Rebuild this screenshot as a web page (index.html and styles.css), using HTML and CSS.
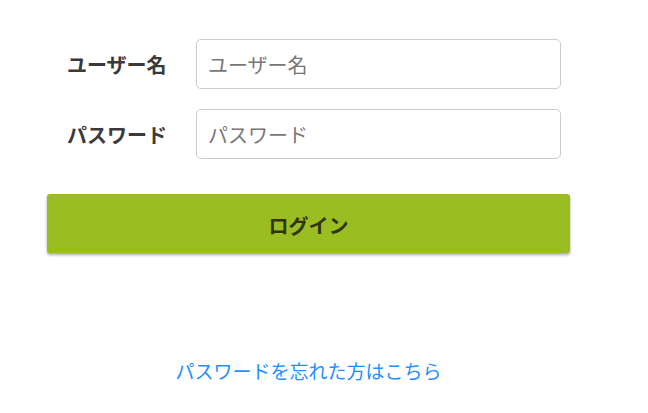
FILE: index.html
```html
<!DOCTYPE html>
<html lang="ja">
<head>
<meta charset="utf-8">
<title>ログイン</title>
<link rel="stylesheet" href="styles.css">
</head>
<body>
<div class="login">
  <form class="login-form">
    <div class="field">
      <label class="field-label" for="username">ユーザー名</label>
      <input class="field-input" id="username" type="text" placeholder="ユーザー名">
    </div>
    <div class="field">
      <label class="field-label" for="password">パスワード</label>
      <input class="field-input" id="password" type="password" placeholder="パスワード">
    </div>
    <button class="login-button" type="button">ログイン</button>
  </form>
  <div class="forgot">
    <a class="forgot-link" href="#">パスワードを忘れた方はこちら</a>
  </div>
</div>
</body>
</html>
```

FILE: styles.css
```css
* { box-sizing: border-box; }
html, body {
  margin: 0;
  padding: 0;
  background: #ffffff;
  font-family: "Noto Sans CJK JP", "Noto Sans", sans-serif;
  color: #333333;
}
.login {
  width: 523px;
  margin-left: 47px;
  padding-top: 39px;
}
.login-form {
  display: flex;
  flex-direction: column;
  gap: 20px;
}
.field {
  display: flex;
  align-items: center;
  padding-left: 20px;
}
.field-label {
  width: 129px;
  font-size: 20px;
  font-weight: bold;
  color: #3a3a3a;
}
.field-input {
  width: 365px;
  height: 50px;
  border: 1px solid #cccccc;
  border-radius: 5px;
  padding: 0 11px;
  font-family: inherit;
  font-size: 20px;
  color: #333333;
  outline: none;
}
.field-input::placeholder {
  color: #777777;
}
.login-button {
  margin-top: 15px;
  width: 523px;
  height: 59px;
  padding-top: 4px;
  border: none;
  border-radius: 3px;
  background: #9abd21;
  box-shadow: 0 2px 3px rgba(0, 0, 0, 0.35);
  font-family: inherit;
  font-size: 20px;
  font-weight: bold;
  color: #2f3310;
}
.forgot {
  margin-top: 103px;
  text-align: center;
  line-height: 30px;
}
.forgot-link {
  font-size: 19px;
  color: #1e8fff;
  text-decoration: none;
}
```
